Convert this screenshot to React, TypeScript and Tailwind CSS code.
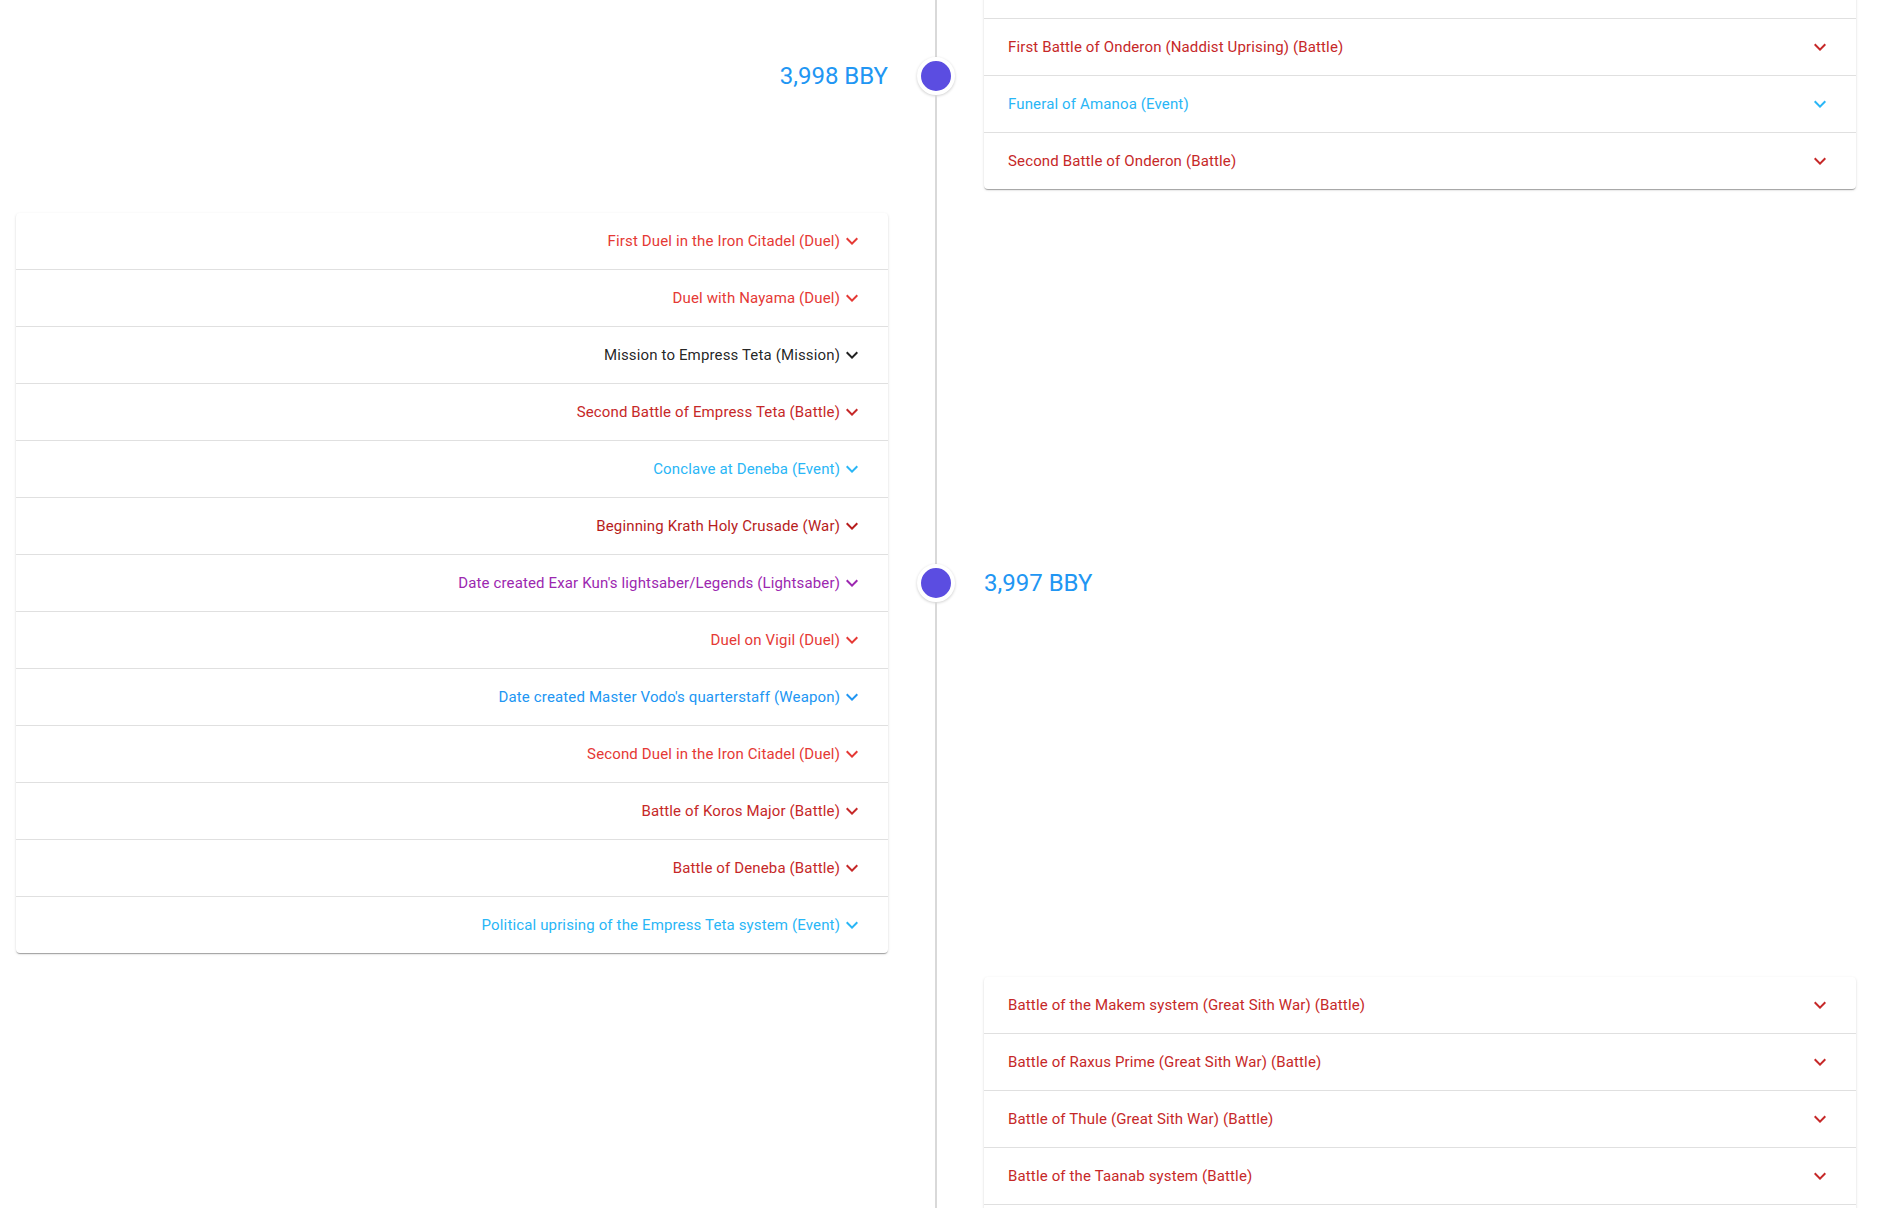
import { ReactNode } from "react";

type Kind = "duel" | "battle" | "war" | "event" | "weapon" | "lightsaber" | "mission";

type Entry = { title: string; kind: Kind };

type Era = {
  label: string;
  side: "left" | "right";
  entries: Entry[];
};

const kindColor: Record<Kind, string> = {
  duel: "text-[#e53935]",
  battle: "text-[#c62828]",
  war: "text-[#b71c1c]",
  event: "text-[#29b6f6]",
  weapon: "text-[#2196f3]",
  lightsaber: "text-[#9c27b0]",
  mission: "text-[rgba(0,0,0,0.87)]",
};

const eras: Era[] = [
  {
    label: "3,998 BBY",
    side: "right",
    entries: [
      { title: "Battle of Iziz (Battle)", kind: "battle" },
      { title: "First Battle of Onderon (Naddist Uprising) (Battle)", kind: "battle" },
      { title: "Funeral of Amanoa (Event)", kind: "event" },
      { title: "Second Battle of Onderon (Battle)", kind: "battle" },
    ],
  },
  {
    label: "3,997 BBY",
    side: "left",
    entries: [
      { title: "First Duel in the Iron Citadel (Duel)", kind: "duel" },
      { title: "Duel with Nayama (Duel)", kind: "duel" },
      { title: "Mission to Empress Teta (Mission)", kind: "mission" },
      { title: "Second Battle of Empress Teta (Battle)", kind: "battle" },
      { title: "Conclave at Deneba (Event)", kind: "event" },
      { title: "Beginning Krath Holy Crusade (War)", kind: "war" },
      { title: "Date created Exar Kun's lightsaber/Legends (Lightsaber)", kind: "lightsaber" },
      { title: "Duel on Vigil (Duel)", kind: "duel" },
      { title: "Date created Master Vodo's quarterstaff (Weapon)", kind: "weapon" },
      { title: "Second Duel in the Iron Citadel (Duel)", kind: "duel" },
      { title: "Battle of Koros Major (Battle)", kind: "battle" },
      { title: "Battle of Deneba (Battle)", kind: "battle" },
      { title: "Political uprising of the Empress Teta system (Event)", kind: "event" },
    ],
  },
  {
    label: "3,996 BBY",
    side: "right",
    entries: [
      { title: "Battle of the Makem system (Great Sith War) (Battle)", kind: "battle" },
      { title: "Battle of Raxus Prime (Great Sith War) (Battle)", kind: "battle" },
      { title: "Battle of Thule (Great Sith War) (Battle)", kind: "battle" },
      { title: "Battle of the Taanab system (Battle)", kind: "battle" },
      { title: "Battle of Foerost (Battle)", kind: "battle" },
      { title: "Battle of Kuat (Battle)", kind: "battle" },
      { title: "Battle of Coruscant (Great Sith War) (Battle)", kind: "battle" },
      { title: "Destruction of Ossus (Event)", kind: "event" },
      { title: "Battle of Ossus (Battle)", kind: "battle" },
      { title: "Battle of Yavin 4 (Battle)", kind: "battle" },
    ],
  },
];

function ExpandIcon() {
  return (
    <svg width="24" height="24" viewBox="0 0 24 24" fill="currentColor" className="shrink-0">
      <path d="M16.59 8.59 12 13.17 7.41 8.59 6 10l6 6 6-6z" />
    </svg>
  );
}

function EventCard({ entries, align }: { entries: Entry[]; align: "left" | "right" }) {
  return (
    <div className="rounded bg-white shadow-[0px_2px_1px_-1px_rgba(0,0,0,0.2),0px_1px_1px_0px_rgba(0,0,0,0.14),0px_1px_3px_0px_rgba(0,0,0,0.12)]">
      {entries.map((e, i) => (
        <div
          key={e.title}
          className={`flex items-center px-6 ${i > 0 ? "h-[57px] border-t border-[rgba(0,0,0,0.12)]" : "h-[56px]"} ${kindColor[e.kind]} ${
            align === "left" ? "justify-end" : "justify-between"
          }`}
        >
          <span className="text-[15px] leading-6 tracking-[0.00938em]">{e.title}</span>
          <ExpandIcon />
        </div>
      ))}
    </div>
  );
}

function Label({ children, align }: { children: ReactNode; align: "left" | "right" }) {
  return (
    <div className={`flex items-center ${align === "left" ? "justify-end" : "justify-start"}`}>
      <span className="text-2xl leading-8 text-[#2196f3]">{children}</span>
    </div>
  );
}

function TimelineItem({ era }: { era: Era }) {
  return (
    <div className="grid grid-cols-[1fr_96px_1fr]">
      <div className="flex flex-col justify-center py-3">
        {era.side === "left" ? <EventCard entries={era.entries} align="left" /> : <Label align="left">{era.label}</Label>}
      </div>
      <div className="flex flex-col items-center">
        <div className="w-[2px] flex-1 bg-[#d9d9d9]" />
        <div className="h-[38px] w-[38px] rounded-full border-4 border-white bg-[#5b4de1] shadow-[0_1px_3px_rgba(0,0,0,0.2)]" />
        <div className="w-[2px] flex-1 bg-[#d9d9d9]" />
      </div>
      <div className="flex flex-col justify-center py-3">
        {era.side === "right" ? <EventCard entries={era.entries} align="right" /> : <Label align="right">{era.label}</Label>}
      </div>
    </div>
  );
}

export default function App() {
  return (
    <div className="h-screen overflow-hidden bg-white font-['Roboto','Helvetica','Arial',sans-serif]">
      <div className="-mt-[50px] pl-4 pr-9">
        {eras.map((era) => (
          <TimelineItem key={era.label} era={era} />
        ))}
      </div>
    </div>
  );
}
